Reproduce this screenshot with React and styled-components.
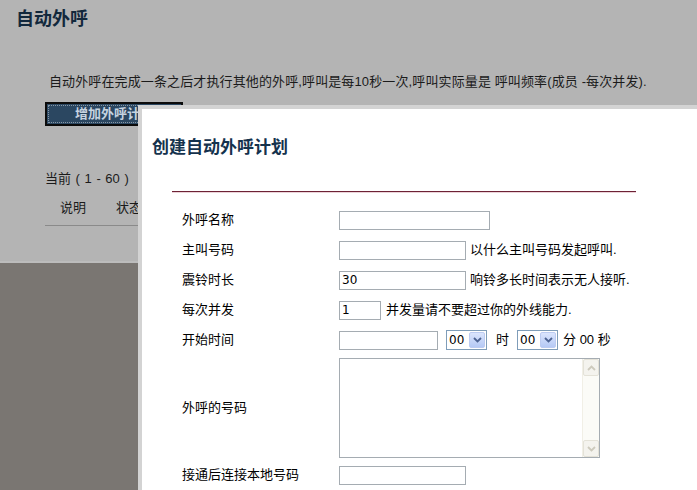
import styled, { createGlobalStyle } from "styled-components";

const GlobalStyle = createGlobalStyle`
  html, body {
    margin: 0;
    padding: 0;
    background: #7a7672;
    overflow: hidden;
  }
  body {
    font-family: "Liberation Sans", "Noto Sans CJK SC", sans-serif;
    font-size: 13px;
    color: #000;
  }
`;

const FONT = `"Liberation Sans", "Noto Sans CJK SC", sans-serif`;

const Page = styled.div`
  position: relative;
  width: 697px;
  height: 490px;
  overflow: hidden;
`;

// dimmed page behind the dialog
const Backdrop = styled.div`
  height: 261px;
  background: #b4b4b4;
  border-bottom: 2px solid #bcbcbc;
  color: #1b1b1b;
  overflow: hidden;
`;

const PageTitle = styled.h1`
  margin: 0;
  padding: 9px 16px 0;
  font-size: 18px;
  line-height: 20px;
  font-weight: bold;
  color: #12283c;
`;

const Intro = styled.p`
  margin: 44px 0 0 49px;
  line-height: 18px;
  letter-spacing: 0.12px;
  white-space: nowrap;
`;

const AddButton = styled.button`
  display: block;
  margin: 11px 0 0 45px;
  width: 138px;
  height: 24px;
  background: #2b4761;
  border: 2px solid #0b0b0b;
  outline: 1px dotted #8797a6;
  outline-offset: -4px;
  color: #c6d3e0;
  font-family: ${FONT};
  font-size: 13px;
  font-weight: bold;
  line-height: 18px;
  padding: 0;
`;

const Pager = styled.div`
  margin: 44px 0 0 45px;
  line-height: 18px;
  white-space: pre;
  word-spacing: 1px;
`;

const TableHead = styled.div`
  display: flex;
  margin: 11px 0 0 45px;
  width: 600px;
  padding-bottom: 8px;
  border-bottom: 1px solid #8a8a8a;
`;

const Th = styled.span`
  padding: 0 15px;
  line-height: 18px;
`;

const Dialog = styled.div`
  position: absolute;
  left: 138px;
  top: 105px;
  right: 0;
  bottom: 0;
  overflow: hidden;
  background: #fff;
  border-top: 4px solid #d3d3d3;
  border-left: 4px solid #d3d3d3;
`;

const DialogTitle = styled.h2`
  margin: 28px 0 0 10px;
  font-size: 17px;
  line-height: 22px;
  font-weight: bold;
  color: #15324d;
`;

const Rule = styled.hr`
  margin: 32px 0 0 30px;
  width: 464px;
  height: 1px;
  border: 0;
  background: #6d2235;
  box-shadow: 0 1px 0 #ecd3d9;
`;

const Form = styled.div`
  margin-top: 13px;
  padding-left: 40px;
`;

const Row = styled.div`
  display: grid;
  grid-template-columns: 157px 1fr;
  align-items: center;
  min-height: ${(p) => p.$h || 30}px;
  padding: ${(p) => (p.$pad ? "3px 0" : "0")};
`;

const Label = styled.label`
  line-height: 18px;
`;

const Field = styled.div`
  display: flex;
  align-items: center;
  gap: ${(p) => p.$gap || 4}px;
`;

const Input = styled.input`
  box-sizing: border-box;
  width: ${(p) => p.$w}px;
  height: 19px;
  margin: 0;
  padding: 0 2px;
  border: 1px solid #a5acb2;
  font-family: "DejaVu Sans", sans-serif;
  font-size: 12px;
  color: #000;
`;

const Hint = styled.span`
  line-height: 18px;
  white-space: nowrap;
  margin-left: ${(p) => p.$ml || 0}px;
`;

const SelectWrap = styled.div`
  display: inline-flex;
  align-items: center;
  box-sizing: border-box;
  width: 41px;
  height: 20px;
  border: 1px solid #7f9db9;
  background: #fff;
`;

const Select = styled.select`
  appearance: none;
  border: 0;
  outline: none;
  background: transparent;
  width: 22px;
  padding: 0 0 0 2px;
  font-family: "DejaVu Sans", sans-serif;
  font-size: 12px;
  color: #000;
`;

const DropBtn = styled.span`
  display: flex;
  align-items: center;
  justify-content: center;
  box-sizing: border-box;
  width: 16px;
  height: 16px;
  margin-left: auto;
  margin-right: 1px;
  border: 1px solid #bccbf1;
  border-radius: 2px;
  background: linear-gradient(#dbe5fd, #b5c9f5);
`;

const AreaWrap = styled.div`
  display: flex;
  box-sizing: border-box;
  width: 261px;
  height: 100px;
  border: 1px solid #a5acb2;
`;

const TextArea = styled.textarea`
  flex: 1;
  border: 0;
  outline: none;
  resize: none;
  overflow: hidden;
  margin: 0;
  padding: 2px;
  font-family: ${FONT};
  font-size: 13px;
`;

const ScrollBar = styled.div`
  display: flex;
  flex-direction: column;
  justify-content: space-between;
  width: 16px;
  background: #fbfbf7;
  border-left: 1px solid #f1efe6;
`;

const ScrollBtn = styled.span`
  display: flex;
  align-items: center;
  justify-content: center;
  box-sizing: border-box;
  height: 17px;
  border: 1px solid #e4e2d8;
  border-radius: 2px;
  background: #f4f3ee;
`;

function Chevron({ up, color }) {
  return (
    <svg width="9" height="6" viewBox="0 0 9 6">
      <path
        d={up ? "M1 5 L4.5 1.5 L8 5" : "M1 1 L4.5 4.5 L8 1"}
        fill="none"
        stroke={color}
        strokeWidth="1.8"
      />
    </svg>
  );
}

function TimeSelect() {
  return (
    <SelectWrap>
      <Select defaultValue="00">
        <option value="00">00</option>
        <option value="01">01</option>
      </Select>
      <DropBtn>
        <Chevron color="#4d6393" />
      </DropBtn>
    </SelectWrap>
  );
}

export default function App() {
  return (
    <Page>
      <GlobalStyle />
      <Backdrop>
        <PageTitle>自动外呼</PageTitle>
        <Intro>
          自动外呼在完成一条之后才执行其他的外呼,呼叫是每10秒一次,呼叫实际量是 呼叫频率(成员 -每次并发).
        </Intro>
        <AddButton>增加外呼计划</AddButton>
        <Pager>当前 ( 1 - 60 )</Pager>
        <TableHead>
          <Th>说明</Th>
          <Th>状态</Th>
        </TableHead>
      </Backdrop>

      <Dialog>
        <DialogTitle>创建自动外呼计划</DialogTitle>
        <Rule />
        <Form>
          <Row>
            <Label>外呼名称</Label>
            <Field>
              <Input $w={151} />
            </Field>
          </Row>
          <Row>
            <Label>主叫号码</Label>
            <Field>
              <Input $w={127} />
              <Hint>以什么主叫号码发起呼叫.</Hint>
            </Field>
          </Row>
          <Row>
            <Label>震铃时长</Label>
            <Field>
              <Input $w={127} defaultValue="30" />
              <Hint>响铃多长时间表示无人接听.</Hint>
            </Field>
          </Row>
          <Row>
            <Label>每次并发</Label>
            <Field $gap={5}>
              <Input $w={42} defaultValue="1" />
              <Hint>并发量请不要超过你的外线能力.</Hint>
            </Field>
          </Row>
          <Row>
            <Label>开始时间</Label>
            <Field $gap={8}>
              <Input $w={99} />
              <TimeSelect />
              <Hint $ml={1}>时</Hint>
              <TimeSelect />
              <Hint $ml={-3}>分 00 秒</Hint>
            </Field>
          </Row>
          <Row $pad>
            <Label>外呼的号码</Label>
            <AreaWrap>
              <TextArea />
              <ScrollBar>
                <ScrollBtn>
                  <Chevron up color="#cdcabd" />
                </ScrollBtn>
                <ScrollBtn>
                  <Chevron color="#cdcabd" />
                </ScrollBtn>
              </ScrollBar>
            </AreaWrap>
          </Row>
          <Row $h={28}>
            <Label>接通后连接本地号码</Label>
            <Field>
              <Input $w={127} />
            </Field>
          </Row>
        </Form>
      </Dialog>
    </Page>
  );
}
